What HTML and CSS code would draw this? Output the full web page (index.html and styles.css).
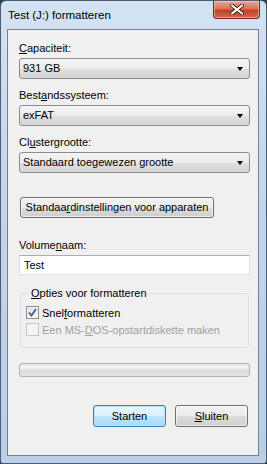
FILE: index.html
```html
<!DOCTYPE html>
<html lang="nl">
<head>
    <meta charset="UTF-8">
    <title>Test (J:) formatteren</title>
    <link rel="stylesheet" href="styles.css">
</head>
<body>

<div class="window">
    <div class="titlebar">
        <span class="title">Test (J:) formatteren</span>
        <div class="close">
            <svg width="16" height="11" viewBox="0 0 16 11">
                <path d="M3 1.5 L13 9.5 M13 1.5 L3 9.5" stroke="#4a1e14" stroke-width="4" stroke-linecap="round"/>
                <path d="M3 1.5 L13 9.5 M13 1.5 L3 9.5" stroke="#ffffff" stroke-width="2.2" stroke-linecap="round"/>
            </svg>
        </div>
    </div>

    <div class="client">
        <div class="field">
            <label><u>C</u>apaciteit:</label>
            <div class="combo"><span>931 GB</span><span class="arrow"></span></div>
        </div>

        <div class="field">
            <label>Best<u>a</u>ndssysteem:</label>
            <div class="combo"><span>exFAT</span><span class="arrow"></span></div>
        </div>

        <div class="field">
            <label>Cl<u>u</u>stergrootte:</label>
            <div class="combo"><span>Standaard toegewezen grootte</span><span class="arrow"></span></div>
        </div>

        <button class="btn btn-defaults">Standaa<u>r</u>dinstellingen voor apparaten</button>

        <div class="field field-volume">
            <label>Volume<u>n</u>aam:</label>
            <div class="textbox">Test</div>
        </div>

        <fieldset class="group">
            <legend><u>O</u>pties voor formatteren</legend>
            <div class="check-row">
                <span class="checkbox checked">
                    <svg width="9" height="9" viewBox="0 0 9 9">
                        <path d="M1 4.5 L3.5 7.5 L8 1" fill="none" stroke="#3c5a9a" stroke-width="1.8"/>
                    </svg>
                </span>
                <span>Snel<u>f</u>ormatteren</span>
            </div>
            <div class="check-row disabled">
                <span class="checkbox"></span>
                <span>Een MS-<u>D</u>OS-opstartdiskette maken</span>
            </div>
        </fieldset>

        <div class="progress"></div>

        <div class="actions">
            <button class="btn btn-primary">Starten</button>
            <button class="btn"><u>S</u>luiten</button>
        </div>
    </div>
</div>

</body>
</html>
```

FILE: styles.css
```css
body {
    margin: 0;
    background-color: #2f3d4c;
    font-family: 'Liberation Sans', Arial, sans-serif;
    font-size: 11px;
    color: #000;
    white-space: nowrap;
}

.window {
    width: 267px;
    height: 464px;
    box-sizing: border-box;
    border: 1px solid #4a5d72;
    border-radius: 6px 6px 3px 3px;
    background: linear-gradient(to bottom, #d4e3f3, #c2d6ec 40%, #b9cfe8);
    padding: 0 7px 7px 6px;
    display: flex;
    flex-direction: column;
}

.titlebar {
    height: 28px;
    display: flex;
    align-items: flex-start;
    justify-content: space-between;
}

.title {
    margin-top: 7px;
    margin-left: 1px;
    line-height: 15px;
    font-size: 11.5px;
}

.close {
    width: 45px;
    height: 17px;
    margin-right: -1px;
    border: 1px solid #6b2a1c;
    border-top: none;
    border-radius: 0 0 4px 4px;
    background: linear-gradient(to bottom, #e9a896, #d7735a 45%, #c2412a 55%, #d4684c);
    display: flex;
    align-items: center;
    justify-content: center;
    box-shadow: inset 0 0 0 1px rgba(255, 220, 210, 0.5);
}

.client {
    flex: 1;
    background-color: #f0f0f0;
    border: 1px solid #6f8296;
    padding: 10px 8px 0 11px;
    display: flex;
    flex-direction: column;
}

.field {
    margin-bottom: 8px;
}

.field label {
    display: block;
    line-height: 16px;
    margin-bottom: 2px;
}

.combo {
    height: 21px;
    box-sizing: border-box;
    border: 1px solid #8c8c8c;
    border-radius: 3px;
    background: linear-gradient(to bottom, #f4f4f4, #ececec 50%, #dfdfdf 51%, #d6d6d6);
    display: flex;
    align-items: center;
    justify-content: space-between;
    padding: 0 6px 0 3px;
    line-height: 19px;
}

.arrow {
    width: 0;
    height: 0;
    border-left: 3.5px solid transparent;
    border-right: 3.5px solid transparent;
    border-top: 4px solid #000;
}

.btn {
    font-family: inherit;
    font-size: 11px;
    color: #000;
    height: 21px;
    box-sizing: border-box;
    border: 1px solid #707070;
    border-radius: 3px;
    background: linear-gradient(to bottom, #f2f2f2, #ebebeb 50%, #dddddd 51%, #cfcfcf);
    padding: 0;
    line-height: 19px;
    white-space: nowrap;
    box-shadow: inset 0 0 0 1px rgba(255, 255, 255, 0.6);
}

.btn-defaults {
    align-self: flex-start;
    width: 194px;
    margin: 16px 0 0 1px;
}

.field-volume {
    margin-top: 19px;
    margin-bottom: 0;
}

.textbox {
    height: 20px;
    box-sizing: border-box;
    background-color: #fff;
    border: 1px solid #dbdfe6;
    border-top-color: #abadb3;
    padding: 0 4px;
    line-height: 18px;
}

.group {
    margin: 11px 1px 0 1px;
    padding: 3px 6px 9px 5px;
    border: 1px solid #d5dfe5;
    border-radius: 3px;
    min-width: 0;
}

.group legend {
    padding: 0 3px;
    margin-left: 2px;
    line-height: 15px;
}

.check-row {
    display: flex;
    align-items: center;
    height: 17px;
    gap: 3px;
}

.check-row.disabled {
    color: #a0a0a0;
}

.checkbox {
    width: 13px;
    height: 13px;
    box-sizing: border-box;
    border: 1px solid #8e8f8f;
    background: linear-gradient(135deg, #dcdcdc, #ffffff);
    display: flex;
    align-items: center;
    justify-content: center;
    box-shadow: inset 0 0 0 1px #f4f4f4;
}

.check-row.disabled .checkbox {
    border-color: #c6c6c6;
    background: #f4f4f4;
}

.progress {
    margin-top: 15px;
    height: 14px;
    box-sizing: border-box;
    border: 1px solid #b2b2b2;
    border-radius: 3px;
    background: linear-gradient(to bottom, #e6e6e6, #f2f2f2 30%, #dcdcdc 60%, #e4e4e4);
}

.actions {
    margin-top: 28px;
    display: flex;
    justify-content: flex-end;
    gap: 9px;
    padding-right: 2px;
}

.actions .btn {
    width: 73px;
    height: 22px;
}

.btn-primary {
    border-color: #3c7fb1;
    background: linear-gradient(to bottom, #eaf6fd, #d9f0fc 50%, #bee6fd 51%, #a7d9f5);
    box-shadow: inset 0 0 0 1px #b5e2fb;
}
```
